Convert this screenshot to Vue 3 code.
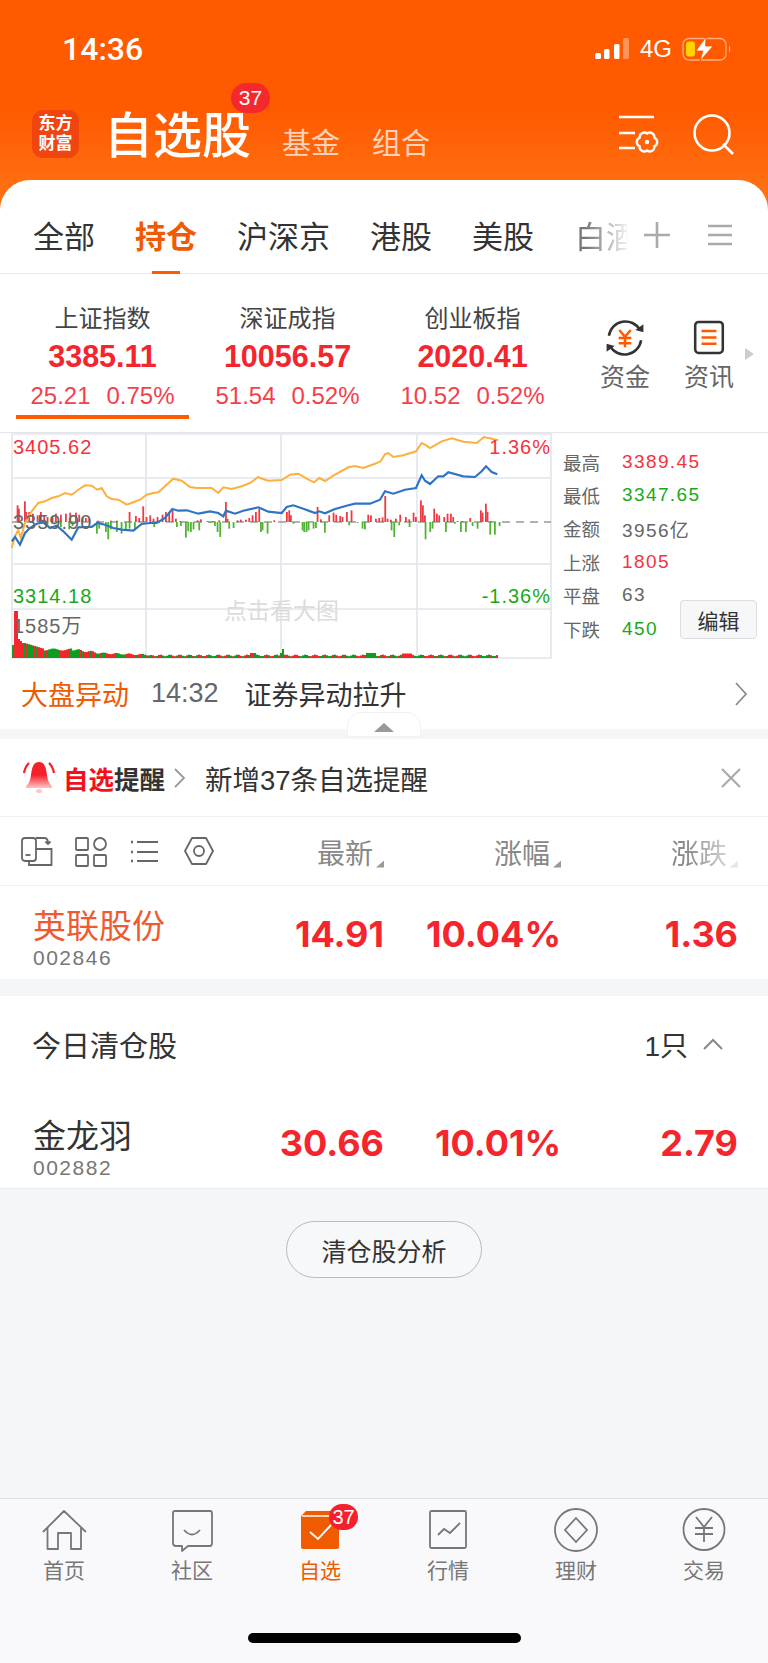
<template>
  <div class="page">
    <!-- orange header -->
    <header class="head">
      <div class="status">
        <span class="time">14:36</span>
        <div class="status-right">
          <svg class="signal" width="36" height="22" viewBox="0 0 36 22">
            <rect x="1" y="15" width="6" height="6" rx="1.5" fill="#fff" />
            <rect x="10" y="11" width="5.5" height="10" rx="1.5" fill="#fff" />
            <rect x="20" y="6" width="5.5" height="15" rx="1.5" fill="#fff" />
            <rect x="29" y="0" width="6" height="21" rx="1.5" fill="#fff" opacity=".35" />
          </svg>
          <span class="net">4G</span>
          <svg class="battery" width="50" height="24" viewBox="0 0 50 24">
            <rect x="1" y="1.5" width="43" height="21.5" rx="6" fill="none" stroke="#fff" stroke-width="1.3" opacity=".5" />
            <rect x="4" y="4.5" width="9" height="15" rx="3" fill="#ffd400" />
            <path d="M24 0 L14 14 H21 L18 24 L31 9 H23.5 Z" fill="#fff" stroke="#ff5a00" stroke-width=".8" />
            <path d="M47 8 q2.5 4 0 8 Z" fill="#fff" opacity=".5" />
          </svg>
        </div>
      </div>
      <div class="title-row">
        <div class="logo"><span>东方</span><span>财富</span></div>
        <div class="title">
          自选股
          <span class="title-badge">37</span>
        </div>
        <span class="sub-title">基金</span>
        <span class="sub-title">组合</span>
        <svg class="head-set" width="46" height="44" viewBox="0 0 46 44">
          <path d="M2 4 H37 M2 20 H18 M2 35 H18" stroke="#fff" stroke-width="2.4" fill="none" />
          <g transform="translate(18 17)" fill="none" stroke="#fff" stroke-width="2.4">
            <path d="M12 3.5 A4.6 4.6 0 0 1 19.36 7.75 A4.6 4.6 0 0 1 19.36 16.25 A4.6 4.6 0 0 1 12 20.5 A4.6 4.6 0 0 1 4.64 16.25 A4.6 4.6 0 0 1 4.64 7.75 A4.6 4.6 0 0 1 12 3.5 Z" />
            <circle cx="12" cy="12" r="2.2" fill="#fff" stroke="none" />
          </g>
        </svg>
        <svg class="head-search" width="44" height="44" viewBox="0 0 44 44">
          <circle cx="20" cy="20" r="17.5" fill="none" stroke="#fff" stroke-width="2.6" />
          <path d="M31 31 L41 41" stroke="#fff" stroke-width="2.6" />
        </svg>
      </div>
      <nav class="tabs">
        <span v-for="t in tabs" :key="t" class="tab" :class="{ on: t === '持仓' }">{{ t }}</span>
        <span class="tab tab-fade">白酒</span>
        <svg class="tab-plus" width="28" height="28" viewBox="0 0 28 28">
          <path d="M14 1 V27 M1 14 H27" stroke="#aaa" stroke-width="2.6" />
        </svg>
        <svg class="tab-menu" width="24" height="24" viewBox="0 0 24 24">
          <path d="M0 3 H24 M0 12 H24 M0 21 H24" stroke="#aaa" stroke-width="2.6" />
        </svg>
      </nav>
    </header>

    <main class="panel">
      <!-- index summary -->
      <section class="indexes">
        <div v-for="(x, i) in indexes" :key="x.name" class="index" :class="{ sel: i === 0 }">
          <div class="index-name">{{ x.name }}</div>
          <div class="index-val">{{ x.val }}</div>
          <div class="index-sub"><span>{{ x.chg }}</span><span>{{ x.pct }}</span></div>
        </div>
        <div class="quick">
          <svg width="46" height="46" viewBox="0 0 40 40">
            <path d="M6 18 A14.5 14.5 0 0 1 33 13 M34 22 A14.5 14.5 0 0 1 7 27" fill="none" stroke="#333" stroke-width="2.2" />
            <path d="M29 13 L36 15 L36 8 Z M11 27 L4 25 L4 32 Z" fill="#333" />
            <path d="M15 13 L20 19 L25 13 M20 19 V28 M14.5 20 H25.5 M14.5 24.5 H25.5" fill="none" stroke="#ff5a00" stroke-width="2.2" />
          </svg>
          <span>资金</span>
        </div>
        <div class="quick">
          <svg width="46" height="46" viewBox="0 0 40 40">
            <rect x="8" y="6" width="24" height="27" rx="3" fill="none" stroke="#333" stroke-width="2.2" />
            <path d="M13.5 14 H26.5 M13.5 19.5 H26.5 M13.5 25 H26.5" stroke="#ff5a00" stroke-width="2.2" />
          </svg>
          <span>资讯</span>
        </div>
        <i class="more-tri"></i>
      </section>

      <!-- intraday chart and market stats -->
      <section class="market">
        <div class="chart">
          <svg width="541" height="227" viewBox="0 0 541 227">
            <path d="M1 1 H540 V225 H1 Z M1 45 H540 M1 131 H540 M1 176 H540 M135 1 V225 M270 1 V225 M406 1 V225" fill="none" stroke="#e2e5ec" stroke-width="1.6" />
            <path d="M1 89 H540" stroke="#999" stroke-width="1.5" stroke-dasharray="8 6" />
            <rect v-for="(b, i) in diffBars" :key="'d' + i" :x="b.x" :y="b.y" width="1.8" :height="b.h" :fill="b.c" />
            <polyline :points="yellowLine" fill="none" stroke="#fdb03c" stroke-width="2" />
            <polyline :points="blueLine" fill="none" stroke="#2f74c4" stroke-width="2.2" />
            <rect v-for="(b, i) in volBars" :key="'v' + i" :x="b.x" :y="b.y" width="2" :height="b.h" :fill="b.c" />
          </svg>
          <span class="lab up" style="left: 2px; top: 2px">3405.62</span>
          <span class="lab up" style="right: 1px; top: 2px">1.36%</span>
          <span class="lab mid" style="left: 2px; top: 77px">3359.90</span>
          <span class="lab down" style="left: 2px; top: 151px">3314.18</span>
          <span class="lab down" style="right: 1px; top: 151px">-1.36%</span>
          <span class="lab mid" style="left: 2px; top: 181px">1585万</span>
          <span class="hint">点击看大图</span>
        </div>
        <div class="stats">
          <div v-for="s in stats" :key="s.k" class="stat">
            <span class="stat-k">{{ s.k }}</span>
            <span class="stat-v" :class="s.c">{{ s.v }}</span>
          </div>
        </div>
        <button class="edit">编辑</button>
      </section>

      <section class="notice">
        <span class="notice-tag">大盘异动</span>
        <span class="notice-time">14:32</span>
        <span class="notice-text">证券异动拉升</span>
        <svg class="notice-go" width="14" height="24" viewBox="0 0 14 24">
          <path d="M2 1 L12 12 L2 23" fill="none" stroke="#888" stroke-width="1.7" />
        </svg>
        <div class="handle"><i></i></div>
      </section>

      <div class="gap-s"></div>

      <section class="remind">
        <svg class="bell" width="34" height="36" viewBox="0 0 34 36">
          <defs>
            <linearGradient id="bellFill" x1="0" y1="0" x2="0" y2="1">
              <stop offset="0" stop-color="#f5202a" />
              <stop offset="0.5" stop-color="#f5202a" />
              <stop offset="1" stop-color="#ffc4c4" />
            </linearGradient>
          </defs>
          <path d="M17 2 C23 2 24 8 25 15 C25.6 20 27 24 30 26 V28 H4 V26 C7 24 8.4 20 9 15 C10 8 11 2 17 2 Z" fill="url(#bellFill)" />
          <ellipse cx="17" cy="31" rx="3" ry="2" fill="#ffc4c4" />
          <path d="M7 3 Q3 7 2 13 M27 3 Q31 7 32 13" fill="none" stroke="#f5202a" stroke-width="2.2" />
        </svg>
        <span class="remind-a">自选</span><span class="remind-b">提醒</span>
        <svg class="remind-go" width="11" height="20" viewBox="0 0 11 20">
          <path d="M1 1 L10 10 L1 19" fill="none" stroke="#999" stroke-width="1.8" />
        </svg>
        <span class="remind-text">新增37条自选提醒</span>
        <svg class="remind-x" width="20" height="20" viewBox="0 0 20 20">
          <path d="M1 1 L19 19 M19 1 L1 19" stroke="#aaa" stroke-width="2.2" />
        </svg>
      </section>

      <section class="sort-row">
        <div class="tools">
          <svg width="32" height="32" viewBox="0 0 32 32" fill="none" stroke="#666" stroke-width="1.8">
            <rect x="1" y="3" width="14" height="23" rx="3" />
            <path d="M4.5 20 H9.5" />
            <path d="M15 14 H30.5 V30 H8 V26" />
            <path d="M15 3 H23 Q27 3 27 8 M24.5 6.5 L27 9 L29.5 6.5" />
          </svg>
          <svg width="32" height="32" viewBox="0 0 32 32" fill="none" stroke="#666" stroke-width="1.8">
            <rect x="1" y="3" width="12" height="12" rx="1" />
            <circle cx="25" cy="9" r="6" />
            <rect x="1" y="20" width="12" height="11" rx="1" />
            <rect x="19" y="20" width="12" height="11" rx="1" />
          </svg>
          <svg width="32" height="32" viewBox="0 0 32 32" fill="none" stroke="#666" stroke-width="2">
            <path d="M8 7 H29 M8 17 H29 M8 26 H29" />
            <path d="M2 7 H4 M2 17 H4 M2 26 H4" stroke-width="2.6" />
          </svg>
          <svg width="32" height="32" viewBox="0 0 32 32" fill="none" stroke="#666" stroke-width="1.8">
            <path d="M9 3 H23 L30 16 L23 29 H9 L2 16 Z" stroke-linejoin="round" />
            <circle cx="16" cy="16" r="5" />
          </svg>
        </div>
        <div v-for="h in heads" :key="h" class="sort-cell" :class="{ last: h === '涨跌' }">
          {{ h }}<i></i>
        </div>
      </section>

      <section class="stock-row">
        <div class="stock-name">
          <div class="name hot">英联股份</div>
          <div class="code">002846</div>
        </div>
        <div class="num">14.91</div>
        <div class="num">10.04%</div>
        <div class="num">1.36</div>
      </section>

      <div class="gap-m"></div>

      <section class="closed">
        <div class="closed-head">
          <span class="closed-title">今日清仓股</span>
          <span class="closed-count">1只</span>
          <svg width="20" height="12" viewBox="0 0 20 12">
            <path d="M1 11 L10 2 L19 11" fill="none" stroke="#888" stroke-width="2" />
          </svg>
        </div>
        <div class="stock-row second">
          <div class="stock-name">
            <div class="name">金龙羽</div>
            <div class="code">002882</div>
          </div>
          <div class="num">30.66</div>
          <div class="num">10.01%</div>
          <div class="num">2.79</div>
        </div>
      </section>

      <button class="analyse">清仓股分析</button>
    </main>

    <!-- bottom navigation -->
    <footer class="foot">
      <div class="foot-tabs">
        <div class="foot-tab">
          <svg width="48" height="48" viewBox="0 0 48 48" fill="none" stroke="#777" stroke-width="1.8">
            <path d="M3 26 L24 5 L46 26 M7.5 22 V43 H18 V27 H31 V43 H41 V22" stroke-linejoin="round" />
          </svg>
          <span>首页</span>
        </div>
        <div class="foot-tab">
          <svg width="48" height="48" viewBox="0 0 48 48" fill="none" stroke="#777" stroke-width="1.8">
            <path d="M7 5 H42 Q44 5 44 7 V37 Q44 40 42 40 H20 L14 45 V40 H8 Q5 40 5 37 V7 Q5 5 7 5 Z" stroke-linejoin="round" />
            <path d="M16 24 Q24 33 32 24" />
          </svg>
          <span>社区</span>
        </div>
        <div class="foot-tab on">
          <svg width="48" height="48" viewBox="0 0 48 48">
            <path d="M10 5 H43 V41 Q43 43 41 43 H7 Q5 43 5 41 V10 Z" fill="#f05a00" />
            <path d="M6 10 H42" stroke="#fff" stroke-width="1.5" />
            <path d="M14 26 L22 33 L35 19" fill="none" stroke="#fff" stroke-width="1.9" />
          </svg>
          <span class="foot-badge">37</span>
          <span>自选</span>
        </div>
        <div class="foot-tab">
          <svg width="48" height="48" viewBox="0 0 48 48" fill="none" stroke="#777" stroke-width="1.8">
            <rect x="6" y="5" width="36" height="37" rx="1.5" />
            <path d="M14 29 L20 23 L26 27 L36 17" />
          </svg>
          <span>行情</span>
        </div>
        <div class="foot-tab">
          <svg width="48" height="48" viewBox="0 0 48 48" fill="none" stroke="#777" stroke-width="1.8">
            <circle cx="24" cy="24" r="21" />
            <path d="M24 12 L35 24 L24 36 L13 24 Z" />
          </svg>
          <span>理财</span>
        </div>
        <div class="foot-tab">
          <svg width="48" height="48" viewBox="0 0 48 48" fill="none" stroke="#777" stroke-width="1.8">
            <circle cx="24" cy="23.5" r="20.5" />
            <path d="M16 11 L24 21 L32 11 M24 21 V36 M15 22 H33 M15 28 H33" />
          </svg>
          <span>交易</span>
        </div>
      </div>
      <div class="home-bar"></div>
    </footer>
  </div>
</template>

<script setup>
const tabs = ['全部', '持仓', '沪深京', '港股', '美股']
const heads = ['最新', '涨幅', '涨跌']

const indexes = [
  { name: '上证指数', val: '3385.11', chg: '25.21', pct: '0.75%' },
  { name: '深证成指', val: '10056.57', chg: '51.54', pct: '0.52%' },
  { name: '创业板指', val: '2020.41', chg: '10.52', pct: '0.52%' },
]

const stats = [
  { k: '最高', v: '3389.45', c: 'up' },
  { k: '最低', v: '3347.65', c: 'down' },
  { k: '金额', v: '3956亿', c: '' },
  { k: '上涨', v: '1805', c: 'up' },
  { k: '平盘', v: '63', c: '' },
  { k: '下跌', v: '450', c: 'down' },
]

// values read off the chart at 3x, [x, y] pairs for each half
const yellowL = [5,345,15,310,25,290,32,315,45,270,65,235,85,210,105,205,125,195,145,190,165,180,185,185,205,170,225,157,245,158,262,170,275,165,290,190,305,198,325,200,350,215,370,208,390,200,410,185,430,180,445,178,465,160,490,137,515,143,540,162,560,165,580,165,605,165,625,180,640,163,665,168,695,160,720,150,745,132]
const yellowR = [0,135,25,143,65,141,90,125,115,122,140,137,162,148,178,135,195,144,225,125,265,103,285,99,310,105,345,92,362,85,375,63,385,60,400,72,430,67,468,55,485,30,495,35,510,45,545,25,575,16,610,26,650,30,672,12,695,17,715,22]
const blueL = [5,325,15,312,30,335,45,300,60,285,80,272,100,268,120,285,140,278,160,295,185,320,205,283,225,282,245,282,262,270,285,275,310,285,335,290,370,293,395,273,420,270,440,270,465,255,487,228,505,233,530,232,565,242,600,235,625,240,640,250,648,233,675,242,700,233,745,223]
const blueR = [0,225,25,236,65,240,80,222,100,217,130,227,165,240,178,235,195,241,225,228,265,217,285,212,330,212,360,200,375,175,400,182,435,170,468,165,485,127,495,143,510,153,535,130,550,130,565,118,610,130,645,132,665,115,678,100,695,117,712,124]

const toPoints = (arr, ox) => {
  const out = []
  for (let i = 0; i < arr.length; i += 2) {
    out.push((ox + arr[i] / 3).toFixed(1) + ',' + (arr[i + 1] / 3).toFixed(1))
  }
  return out.join(' ')
}
const yellowLine = toPoints(yellowL, -1) + ' ' + toPoints(yellowR, 249)
const blueLine = toPoints(blueL, -1) + ' ' + toPoints(blueR, 249)

const barsL = [20,50,24,40,42,62,46,30,55,30,66,25,80,20,90,30,100,20,110,15,125,15,135,25,150,22,165,25,178,28,195,28,205,22,215,15,225,12,235,10,262,4,300,4,318,4,356,30,375,18,385,12,397,47,407,15,418,20,428,10,440,15,455,22,465,30,475,30,485,35,495,10,508,3,560,5,570,8,590,3,605,3,625,5,645,60,650,10,680,5,690,7,705,7,715,12,725,20,735,30,745,40,
  110,-8,150,-15,175,-22,185,-12,258,-35,265,-20,285,-30,292,-52,300,-22,318,-30,332,-35,345,-25,356,-20,372,-25,430,-15,498,-15,510,-12,525,-47,532,-28,540,-30,548,-22,565,-25,598,-3,612,-12,620,-30,628,-45,655,-20,668,-18]
const barsR = [40,5,78,30,85,35,90,20,170,45,180,8,205,20,218,28,226,22,238,18,245,15,258,30,272,35,322,22,330,20,345,10,355,12,365,14,373,78,380,10,390,7,405,10,418,22,435,15,445,8,458,28,465,15,480,65,486,50,492,20,520,40,528,25,535,20,550,15,560,25,570,25,577,15,590,3,605,3,628,12,660,35,665,28,675,55,680,30,690,3,
  0,-30,5,-25,20,-35,98,-5,125,-25,130,-30,137,-30,143,-25,158,-20,165,-18,192,-32,265,-10,290,-3,305,-20,312,-22,392,-25,400,-45,415,-10,446,-15,494,-52,508,-30,515,-20,555,-30,582,-5,600,-30,615,-30,635,-12,650,-20,688,-38,702,-38,716,-12]

const toBars = (arr, ox) => {
  const out = []
  for (let i = 0; i < arr.length; i += 2) {
    const v = arr[i + 1] / 3
    out.push({
      x: ox + arr[i] / 3,
      y: v > 0 ? 89 - v : 89,
      h: Math.abs(v),
      c: v > 0 ? '#ee3b43' : '#52b333',
    })
  }
  return out
}
const diffBars = [...toBars(barsL, -1), ...toBars(barsR, 249)]

// volume bars: steep opening spike, then a low flat tail with a few bumps
const volHeight = (i) => {
  if (i === 0) return 13
  if (i < 3) return 47
  if (i < 6) return 19 - (i - 3) * 2
  if (i < 16) return 15 - (i - 6) * 0.6
  if (i < 30) return 8.5 + Math.sin(i * 0.7)
  if (i < 45) return 8.5 - (i - 30) * 0.25 + Math.sin(i)
  if (i < 70) return 4.8 - (i - 45) * 0.07 + Math.sin(i) * 0.7
  let h = 2.6 + Math.sin(i * 1.3) * 0.8
  if (i === 135) h = 9
  if (i === 134) h = 5
  if (i > 118 && i < 122) h = 5
  if (i > 176 && i < 182) h = 5
  if (i > 194 && i < 200) h = 4.5
  return h
}
const volBars = Array.from({ length: 243 }, (_, i) => {
  const h = volHeight(i)
  return {
    x: 1 + i * 2,
    y: 225 - h,
    h,
    c: i > 0 && i < 4 ? '#f5252d' : Math.sin(i * 0.55) + Math.sin(i * 1.9) > 0 ? '#f5252d' : '#0f9d1f',
  }
})
</script>

<style scoped>
.page {
  display: flex;
  flex-direction: column;
  width: 768px;
  height: 1663px;
  overflow: hidden;
  background: #f5f6f8;
  font-family: "Liberation Sans", "Noto Sans CJK SC", sans-serif;
  color: #333;
}

/* header */
.head {
  background: linear-gradient(180deg, #ff5a00 0%, #ff5a00 40%, #ff7b1c 85%);
}
.status {
  display: flex;
  align-items: center;
  height: 98px;
  padding: 0 36px 0 62px;
  box-sizing: border-box;
}
.time {
  font-family: Roboto, sans-serif;
  font-size: 32px;
  font-weight: 500;
  color: #fff;
}
.status-right {
  display: flex;
  align-items: center;
  margin-left: auto;
}
.net {
  margin: 0 10px 0 10px;
  font-size: 24px;
  color: #fff;
}
.title-row {
  display: flex;
  align-items: flex-end;
  height: 82px;
  padding: 0 0 0 32px;
  box-sizing: border-box;
  color: #fff;
}
.logo {
  display: flex;
  flex-direction: column;
  align-items: center;
  justify-content: center;
  width: 47px;
  height: 48px;
  margin-bottom: 22px;
  border-radius: 11px;
  background: #f0450f;
  font-size: 17px;
  font-weight: 700;
  line-height: 20px;
}
.title {
  position: relative;
  margin: 0 -1px 14px 25px;
  font-size: 49px;
  font-weight: 500;
  line-height: 60px;
}
.title-badge {
  position: absolute;
  top: -23px;
  right: -19px;
  width: 39px;
  height: 30px;
  border-radius: 15px;
  background: #f4282d;
  font-size: 21px;
  font-weight: 400;
  line-height: 30px;
  text-align: center;
}
.sub-title {
  margin: 0 0 12px 32px;
  font-size: 29px;
  line-height: 48px;
  color: rgba(255, 255, 255, 0.72);
}
.head-set {
  margin: 0 29px 23px auto;
}
.head-search {
  margin: 0 32px 23px 0;
}
.tabs {
  display: flex;
  align-items: center;
  gap: 40px;
  height: 94px;
  padding: 16px 0 0 33px;
  box-sizing: border-box;
  background: #fff;
  border-radius: 30px 30px 0 0;
  border-bottom: 1px solid #e8eaee;
}
.tab {
  position: relative;
  font-size: 31px;
  white-space: nowrap;
}
.tab.on {
  color: #f05a00;
  font-weight: 700;
}
.tab.on::after {
  content: "";
  position: absolute;
  left: 17px;
  right: 17px;
  bottom: -18px;
  height: 4px;
  background: #ff5a00;
}
.tab-fade {
  width: 52px;
  margin-left: 1px;
  overflow: hidden;
  color: #777;
  -webkit-mask-image: linear-gradient(90deg, #000 20%, rgba(0, 0, 0, 0.1) 100%);
  mask-image: linear-gradient(90deg, #000 20%, rgba(0, 0, 0, 0.1) 100%);
}
.tab-plus {
  margin-left: -24px;
}
.tab-menu {
  margin-left: -3px;
}

/* panel */
.panel {
  display: flex;
  flex: 1;
  flex-direction: column;
  min-height: 0;
}
.indexes {
  display: flex;
  align-items: flex-start;
  gap: 12px;
  position: relative;
  height: 159px;
  padding: 28px 0 0 16px;
  box-sizing: border-box;
  background: #fff;
  border-bottom: 1px solid #e3e5ea;
}
.index {
  width: 173px;
  height: 117px;
  box-sizing: border-box;
  text-align: center;
}
.index.sel {
  border-bottom: 4px solid #ff5a00;
}
.index-name {
  font-size: 24px;
  line-height: 34px;
  color: #444;
}
.index-val {
  font-size: 30.5px;
  font-weight: 700;
  line-height: 40px;
  color: #f5252d;
}
.index-sub {
  display: flex;
  justify-content: center;
  gap: 16px;
  font-size: 24px;
  line-height: 39px;
  color: #f5404a;
}
.quick {
  display: flex;
  flex-direction: column;
  align-items: center;
  width: 52px;
  margin: 13px 0 0 28px;
  font-size: 25px;
  color: #666;
}
.quick + .quick {
  margin-left: 20px;
}
.quick span {
  margin-top: -3px;
  line-height: 38px;
  white-space: nowrap;
}
.more-tri {
  position: absolute;
  left: 745px;
  top: 74px;
  border-left: 9px solid #ccc;
  border-top: 6px solid transparent;
  border-bottom: 6px solid transparent;
}

/* chart */
.market {
  display: flex;
  align-items: flex-start;
  height: 227px;
  padding-left: 11px;
  box-sizing: border-box;
  background: #fff;
}
.chart {
  position: relative;
  flex: none;
  width: 541px;
  height: 227px;
}
.chart svg {
  display: block;
}
.lab {
  position: absolute;
  font-size: 20px;
  letter-spacing: 1px;
  line-height: 24px;
  white-space: nowrap;
}
.up {
  color: #f5333b;
}
.down {
  color: #1aa81a;
}
.mid {
  color: #666;
}
.hint {
  position: absolute;
  left: 213px;
  top: 163px;
  font-size: 23px;
  line-height: 30px;
  color: #dcdcdc;
}
.stats {
  flex: none;
  width: 117px;
  margin: 12px 0 0 11px;
}
.stat {
  display: flex;
  align-items: center;
  height: 33.4px;
  white-space: nowrap;
}
.stat-k {
  flex: none;
  width: 59px;
  font-size: 18.5px;
  color: #666;
}
.stat-v {
  flex: none;
  font-size: 19px;
  letter-spacing: 1.4px;
  color: #666;
}
.stat-v.up {
  color: #f5333b;
}
.stat-v.down {
  color: #1aa81a;
}
.edit {
  flex: none;
  width: 77px;
  height: 39px;
  margin-top: 167px;
  padding: 0;
  border: 1px solid #ddd;
  border-radius: 4px;
  background: #f6f7f9;
  font-family: inherit;
  font-size: 21px;
  color: #333;
}

/* notice */
.notice {
  position: relative;
  display: flex;
  align-items: center;
  height: 69px;
  padding: 0 20px 2px 21px;
  box-sizing: border-box;
  background: #fff;
}
.notice-tag {
  font-size: 27px;
  color: #f05a00;
}
.notice-time {
  margin-left: 22px;
  font-size: 27px;
  color: #666;
}
.notice-text {
  margin-left: 26px;
  font-size: 27px;
}
.notice-go {
  margin-left: auto;
}
.handle {
  position: absolute;
  z-index: 1;
  left: 347px;
  top: 52px;
  display: flex;
  justify-content: center;
  width: 74px;
  height: 25px;
  box-sizing: border-box;
  padding-top: 10px;
  background: #fff;
  border: 1px solid #f0f1f3;
  border-radius: 14px 14px 2px 2px;
}
.handle i {
  width: 0;
  height: 0;
  border-left: 10px solid transparent;
  border-right: 10px solid transparent;
  border-bottom: 9px solid #999;
}
.gap-s {
  flex: none;
  height: 10px;
}

/* reminder */
.remind {
  display: flex;
  align-items: center;
  height: 78px;
  padding: 0 27px 0 22px;
  box-sizing: border-box;
  background: #fff;
  border-bottom: 1px solid #f0f1f3;
}
.remind-a,
.remind-b {
  font-size: 25.5px;
  font-weight: 700;
}
.remind-a {
  margin-left: 7px;
  color: #f50f1a;
}
.remind-b {
  color: #333;
}
.remind-go {
  margin-left: 9px;
}
.remind-text {
  margin-left: 20px;
  font-size: 27.5px;
}
.remind-x {
  margin-left: auto;
}

/* list head */
.sort-row {
  display: grid;
  grid-template-columns: 223px 161px 177px 177px;
  align-items: center;
  height: 69px;
  box-sizing: border-box;
  background: #fff;
  border-bottom: 1px solid #eff0f2;
}
.tools {
  display: flex;
  gap: 22px;
  padding-left: 21px;
}
.sort-cell {
  position: relative;
  margin-top: 7px;
  padding-right: 11px;
  font-size: 28px;
  line-height: 40px;
  text-align: right;
  color: #888;
}
.sort-cell i {
  position: absolute;
  right: 0;
  bottom: 7px;
  width: 8px;
  height: 7px;
  background: #999;
  clip-path: polygon(100% 0, 100% 100%, 0 100%);
}
.sort-cell.last {
  -webkit-mask-image: linear-gradient(90deg, #000 70%, rgba(0, 0, 0, 0.2) 100%);
  mask-image: linear-gradient(90deg, #000 70%, rgba(0, 0, 0, 0.2) 100%);
}

/* stock rows */
.stock-row {
  display: grid;
  grid-template-columns: 234px 150px 177px 177px;
  align-items: start;
  height: 93px;
  box-sizing: border-box;
  background: #fff;
}
.stock-name {
  padding: 19px 0 0 33px;
}
.name {
  font-size: 33px;
  line-height: 44px;
  white-space: nowrap;
}
.name.hot {
  color: #f05a30;
}
.code {
  margin-top: -3px;
  font-size: 21px;
  line-height: 24px;
  letter-spacing: 1.5px;
  color: #777;
}
.num {
  padding-top: 25px;
  font-family: Inter, "Liberation Sans", sans-serif;
  font-size: 36px;
  font-weight: 700;
  line-height: 46px;
  text-align: right;
  color: #f5252d;
}
.gap-m {
  flex: none;
  height: 17px;
}
.closed {
  flex: none;
  background: #fff;
}
.closed-head {
  display: flex;
  align-items: center;
  height: 100px;
  padding: 0 45px 4px 32px;
  box-sizing: border-box;
}
.closed-title {
  font-size: 29px;
}
.closed-count {
  margin: 0 15px 0 auto;
  font-size: 28px;
}
.stock-row.second {
  height: 93px;
  margin-left: 0;
  border-bottom: 1px solid #e9ebef;
}
.stock-row.second .stock-name {
  padding-top: 19px;
}
.stock-row.second .num {
  padding-top: 24px;
}
.analyse {
  flex: none;
  align-self: center;
  width: 196px;
  height: 57px;
  margin-top: 32px;
  padding: 0;
  border: 1px solid #bbb;
  border-radius: 29px;
  background: #f7f8fa;
  font-family: inherit;
  font-size: 25px;
  color: #333;
}

/* bottom nav */
.foot {
  flex: none;
  height: 165px;
  box-sizing: border-box;
  background: #f9f9fb;
  border-top: 1px solid #dfe0e3;
}
.foot-tabs {
  display: grid;
  grid-template-columns: repeat(6, 128px);
}
.foot-tab {
  position: relative;
  display: flex;
  flex-direction: column;
  align-items: center;
  padding-top: 7px;
  font-size: 21px;
  color: #777;
}
.foot-tab span {
  line-height: 30px;
  margin-top: 2px;
}
.foot-tab.on {
  color: #f05a00;
}
.foot-tab .foot-badge {
  position: absolute;
  left: 73px;
  top: 5px;
  width: 29px;
  height: 26px;
  margin: 0;
  border-radius: 13px;
  background: #f4212c;
  font-size: 20px;
  line-height: 26px;
  text-align: center;
  color: #fff;
}
.home-bar {
  width: 273px;
  height: 10px;
  margin: 47px auto 0;
  border-radius: 5px;
  background: #000;
}
</style>

<style>
html,
body {
  margin: 0;
  background: #f5f6f8;
}
</style>
